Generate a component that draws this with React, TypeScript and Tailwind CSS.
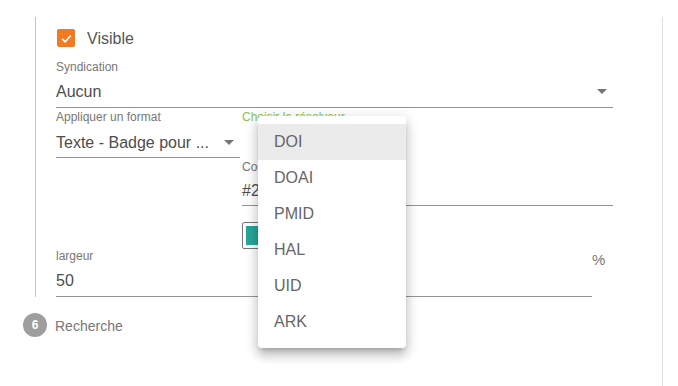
import React from "react";

const resolvers = ["DOI", "DOAI", "PMID", "HAL", "UID", "ARK"];

function Caret() {
  return (
    <svg width="10" height="5" viewBox="0 0 10 5" className="shrink-0">
      <path d="M0 0 L10 0 L5 5 Z" fill="#757575" />
    </svg>
  );
}

function Label({
  children,
  color = "text-[#777]",
  className = "",
}: {
  children: React.ReactNode;
  color?: string;
  className?: string;
}) {
  return (
    <div className={`h-[14px] text-[12px] leading-[14px] whitespace-nowrap ${color} ${className}`}>
      {children}
    </div>
  );
}

export default function App() {
  return (
    <div
      className="relative w-[678px] h-[386px] bg-white overflow-hidden text-[#4d4d4d]"
      style={{ fontFamily: '"Liberation Sans", Arial, sans-serif' }}
    >
      <div className="w-[663px] h-[384px] border-r border-[#e0e0e0] pl-[23px]">
        {/* step content with connector line */}
        <div className="ml-[12px] mt-[17px] border-l border-[#c4c4c4] pl-[20px] w-[578px]">
          <div className="pt-[12px] pb-[1px] flex items-center h-[31px]">
            <span className="w-[18px] h-[18px] ml-[1px] rounded-[2px] bg-[#f27b21] flex items-center justify-center">
              <svg width="13" height="13" viewBox="0 0 24 24">
                <path d="M4 12.5 L9.5 18 L20 6.5" fill="none" stroke="white" strokeWidth="3.2" />
              </svg>
            </span>
            <span className="ml-[12px] text-[16px] leading-[19px] text-[#555]">Visible</span>
          </div>

          <Label className="mt-[12px]">Syndication</Label>
          <div className="w-[557px] pt-[8px] pb-[6px] border-b border-[#949494] flex items-center justify-between pr-[6px] leading-[19px]">
            <span className="text-[16px] leading-[19px]">Aucun</span>
            <Caret />
          </div>

          <div className="flex gap-[2px]">
            <div className="w-[184px]">
              <Label className="mt-[2px]">Appliquer un format</Label>
              <div className="pt-[9px] pb-[5px] border-b border-[#949494] flex items-center pr-[6px] gap-[15px]">
                <span className="text-[16px] leading-[19px] whitespace-nowrap">Texte - Badge pour ...</span>
                <Caret />
              </div>
            </div>
            <div className="w-[371px]">
              <Label className="mt-[2px]" color="text-[#8bc34a]">
                Choisir le résolveur
              </Label>
              <div className="h-[34px]" />
              <Label className="mt-[2px]">Couleur</Label>
              <div className="pt-[7px] pb-[5px] border-b border-[#949494] text-[16px] leading-[19px]">
                #26a69a
              </div>
              <div className="mt-[16px] w-[40px] h-[27px] border border-[#777] rounded-[2px] p-[3px] bg-white">
                <div className="w-full h-full bg-[#26a69a]" />
              </div>
            </div>
          </div>

          <div className="flex items-start">
            <div className="w-[536px]">
              <Label>largeur</Label>
              <div className="pt-[8px] pb-[6px] border-b border-[#949494] text-[16px] leading-[19px]">50</div>
            </div>
            <span className="mt-[2px] text-[15px] leading-[17px] text-[#777]">%</span>
          </div>
        </div>

        <div className="mt-[16px] flex items-start">
          <span className="w-[24px] h-[24px] rounded-full bg-[#9e9e9e] text-white text-[12px] font-bold flex items-center justify-center">
            6
          </span>
          <span className="ml-[8px] mt-[3px] text-[14px] leading-[20px] text-[#777]">Recherche</span>
        </div>
      </div>

      {/* open resolver menu */}
      <div className="absolute left-[258px] top-[116px] w-[148px] bg-white rounded-[4px] py-[8px] shadow-[0_5px_5px_-3px_rgba(0,0,0,0.2),0_8px_10px_1px_rgba(0,0,0,0.14),0_3px_14px_2px_rgba(0,0,0,0.12)]">
        {resolvers.map((r, i) => (
          <div
            key={r}
            className={`h-[36px] px-[16px] flex items-center text-[16px] text-[#666] ${i === 0 ? "bg-[#ebebeb]" : ""}`}
          >
            {r}
          </div>
        ))}
      </div>
    </div>
  );
}
